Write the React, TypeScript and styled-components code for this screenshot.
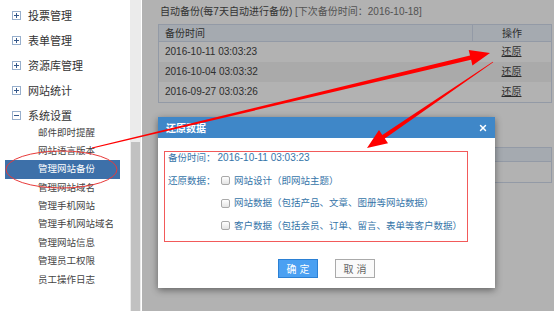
import { createGlobalStyle, styled } from 'styled-components'
import { X } from 'lucide-react'

const GlobalStyle = createGlobalStyle`
  html, body {
    margin: 0;
    padding: 0;
  }
  body {
    width: 554px;
    height: 311px;
    overflow: hidden;
    background: #fff;
    font-family: "Liberation Sans", "Noto Sans CJK SC", sans-serif;
  }
  * {
    box-sizing: border-box;
  }
`

const Page = styled.div`
  position: relative;
  display: flex;
  width: 554px;
  height: 311px;
  overflow: hidden;
`

// ---- left menu ----
const Sidebar = styled.nav`
  flex: none;
  width: 130px;
  padding-top: 2.5px;
  background: #fff;
`
const GroupTitle = styled.div`
  display: flex;
  align-items: center;
  gap: 7px;
  height: 25px;
  padding-left: 12px;
  font-size: 11px;
  color: #333;
`
const SubList = styled.div`
  margin-top: -4px;
`
const SubItem = styled.div<{ $active?: boolean }>`
  height: 18.4px;
  line-height: 18.4px;
  margin: 0 10px 0 5px;
  padding-left: 33px;
  font-size: 9.5px;
  white-space: nowrap;
  color: ${p => (p.$active ? '#fff' : '#444')};
  background: ${p => (p.$active ? '#3d70a9' : 'transparent')};
`
const ScrollTrack = styled.div`
  flex: none;
  display: flex;
  flex-direction: column;
  width: 12px;
  padding: 142px 1px 0 1px;
  background: #ebebeb;
  border-right: 1px solid #fff;
`
const ScrollThumb = styled.div`
  flex: 1;
  width: 9px;
  background: #c1c1c1;
`

// ---- right content ----
const Main = styled.main`
  position: relative;
  flex: 1;
  padding: 5px 2px 0 16px;
  background: #fff;
`
const Caption = styled.div`
  height: 14px;
  line-height: 14px;
  padding-left: 2px;
  font-size: 10px;
  color: #4a4a4a;
  white-space: nowrap;
  span {
    color: #777;
  }
`
const Table = styled.div<{ $gap: number }>`
  margin-top: ${p => p.$gap}px;
  border: 1px solid #d3ddee;
  font-size: 10px;
  color: #444;
`
const HeadRow = styled.div<{ $h: number }>`
  display: grid;
  grid-template-columns: 1fr 79px;
  height: ${p => p.$h}px;
  line-height: ${p => p.$h}px;
  background: #edf4fd;
  border-bottom: 1px solid #d3ddee;
  div:first-child {
    padding-left: 6px;
  }
  div:last-child {
    text-align: center;
    border-left: 1px solid #d3ddee;
  }
`
const Row = styled.div<{ $even?: boolean }>`
  display: grid;
  grid-template-columns: 1fr 79px;
  height: 20px;
  line-height: 20px;
  background: ${p => (p.$even ? '#f4f4f4' : '#fff')};
  div:first-child {
    padding-left: 6px;
  }
  div:last-child {
    text-align: center;
  }
`
const BlankHead = styled.div`
  height: 14px;
  background: #edf4fd;
  border-bottom: 1px solid #d3ddee;
`
const BlankRow = styled.div`
  height: 20px;
  background: #fff;
`
const RestoreLink = styled.span`
  text-decoration: underline;
  color: #444;
`
const Mask = styled.div`
  position: absolute;
  inset: 0;
  background: rgba(0, 0, 0, 0.3);
`

// ---- dialog ----
const Dialog = styled.div`
  position: absolute;
  left: 16px;
  top: 117px;
  width: 337px;
  padding-bottom: 10px;
  background: #fff;
  box-shadow: 0 2px 7px rgba(0, 0, 0, 0.45);
`
const DialogHeader = styled.div`
  display: flex;
  align-items: center;
  justify-content: space-between;
  height: 21px;
  padding: 0 7px 0 8px;
  background: #3f87c8;
  color: #fff;
  font-size: 10px;
  font-weight: bold;
`
const Frame = styled.div`
  display: grid;
  grid-template-columns: 53px 1fr;
  row-gap: 10.5px;
  margin: 13px 27px 0 6px;
  padding: 0 0 9.5px 3px;
  border: 1px solid #f25a5a;
  font-size: 9.5px;
  line-height: 12px;
  color: #3574a8;
  white-space: nowrap;
`
const FullLine = styled.div`
  grid-column: 1 / 3;
`
const Stamp = styled.span`
  margin-left: 2px;
  font-size: 10px;
`
const Options = styled.div`
  display: flex;
  flex-direction: column;
  gap: 10.5px;
`
const Option = styled.label`
  display: flex;
  align-items: center;
  gap: 4px;
`
const Check = styled.span`
  width: 9px;
  height: 9px;
  border: 1px solid #a9a9a9;
  border-radius: 2px;
  background: linear-gradient(#fff, #e4e4e4);
`
const Buttons = styled.div`
  display: flex;
  justify-content: center;
  gap: 17px;
  margin-top: 17px;
`
const Button = styled.button<{ $primary?: boolean }>`
  width: 40px;
  height: 19px;
  padding: 0;
  font-family: inherit;
  font-size: 10px;
  border: 1px solid ${p => (p.$primary ? '#2b80d4' : '#aaa')};
  background: ${p => (p.$primary ? '#4aa0f2' : '#fafafa')};
  color: ${p => (p.$primary ? '#fff' : '#666')};
`

// ---- annotations ----
const Marks = styled.svg`
  position: absolute;
  left: 0;
  top: 0;
  pointer-events: none;
`

const PlusBox = ({ open }: { open?: boolean }) => (
  <svg width="9" height="9" viewBox="0 0 9 9">
    <rect x="0.5" y="0.5" width="8" height="8" fill="#fff" stroke="#98afcc" />
    <path d="M2 4.5h5" stroke="#35588a" strokeWidth="1" />
    {!open && <path d="M4.5 2v5" stroke="#35588a" strokeWidth="1" />}
  </svg>
)

const groups = ['投票管理', '表单管理', '资源库管理', '网站统计']
const subItems = [
  '邮件即时提醒',
  '网站语言版本',
  '管理网站备份',
  '管理网站域名',
  '管理手机网站',
  '管理手机网站域名',
  '管理网站信息',
  '管理员工权限',
  '员工操作日志',
]
const backups = ['2016-10-11 03:03:23', '2016-10-04 03:03:32', '2016-09-27 03:03:26']

export default function App() {
  return (
    <Page>
      <GlobalStyle />
      <Sidebar>
        {groups.map(g => (
          <GroupTitle key={g}>
            <PlusBox />
            {g}
          </GroupTitle>
        ))}
        <GroupTitle>
          <PlusBox open />
          系统设置
        </GroupTitle>
        <SubList>
          {subItems.map(s => (
            <SubItem key={s} $active={s === '管理网站备份'}>{s}</SubItem>
          ))}
        </SubList>
      </Sidebar>
      <ScrollTrack>
        <ScrollThumb />
      </ScrollTrack>
      <Main>
        <Caption>
          自动备份(每7天自动进行备份) <span>[下次备份时间：2016-10-18]</span>
        </Caption>
        <Table $gap={5}>
          <HeadRow $h={17}>
            <div>备份时间</div>
            <div>操作</div>
          </HeadRow>
          {backups.map((b, i) => (
            <Row key={b} $even={i % 2 === 1}>
              <div>{b}</div>
              <div><RestoreLink>还原</RestoreLink></div>
            </Row>
          ))}
        </Table>
        {/* second table lies behind the dialog, only its right edge shows */}
        <Table $gap={44}>
          <BlankHead />
          <BlankRow />
        </Table>
        <Mask />
        <Dialog>
          <DialogHeader>
            还原数据
            <X size={10} strokeWidth={3.5} color="#fff" />
          </DialogHeader>
          <Frame>
            <FullLine>备份时间：<Stamp>2016-10-11 03:03:23</Stamp></FullLine>
            <div>还原数据：</div>
            <Options>
              <Option><Check />网站设计（即网站主题）</Option>
              <Option><Check />网站数据（包括产品、文章、图册等网站数据）</Option>
              <Option><Check />客户数据（包括会员、订单、留言、表单等客户数据）</Option>
            </Options>
          </Frame>
          <Buttons>
            <Button $primary>确 定</Button>
            <Button>取 消</Button>
          </Buttons>
        </Dialog>
      </Main>
      <Marks width="554" height="311" viewBox="0 0 554 311">
        <ellipse cx="61.5" cy="169.5" rx="55.5" ry="18.5" fill="none" stroke="#e83a3a" strokeWidth="1" />
        <polygon
          fill="#ff0000"
          points="91.9,147.5 470.0,55.5 468.7,49.9 490,53 472.4,65.4 471.1,59.8 92.1,148.5"
        />
        <polygon
          fill="#ff0000"
          points="492.8,61.7 382.3,134.9 379.0,130.1 367,148 388.0,143.3 384.8,138.5 493.2,62.3"
        />
      </Marks>
    </Page>
  )
}
